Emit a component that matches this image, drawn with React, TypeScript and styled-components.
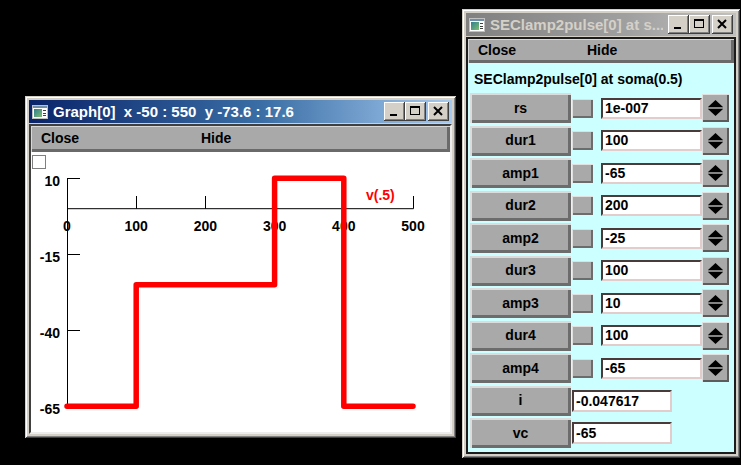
import React from 'react'
import styled, { createGlobalStyle } from 'styled-components'

const GlobalStyle = createGlobalStyle`
  html, body {
    margin: 0;
    padding: 0;
    background: #000;
  }
  body {
    font-family: 'Liberation Sans', Arial, sans-serif;
  }
`

const Desktop = styled.div`
  position: relative;
  width: 741px;
  height: 465px;
  background: #000;
  overflow: hidden;
`

// windows sit on the desktop at their own coordinates
const Win = styled.div<{ $x: number; $y: number; $w: number; $h: number }>`
  position: absolute;
  left: ${p => p.$x}px;
  top: ${p => p.$y}px;
  width: ${p => p.$w}px;
  height: ${p => p.$h}px;
  box-sizing: border-box;
  padding: 4px;
  background: #d4d0c8;
  box-shadow: inset 1px 1px 0 #d4d0c8, inset -1px -1px 0 #404040, inset 2px 2px 0 #ffffff,
    inset -2px -2px 0 #808080;
  display: flex;
  flex-direction: column;
`

const TitleBar = styled.div<{ $active?: boolean }>`
  height: 23px;
  flex-shrink: 0;
  display: flex;
  align-items: center;
  gap: 5px;
  padding: 0 3px;
  background: ${p =>
    p.$active
      ? 'linear-gradient(90deg, #0a246a 0%, #3a6ea5 55%, #a6caf0 100%)'
      : 'linear-gradient(90deg, #808080 0%, #a0a0a0 60%, #c0c0c0 100%)'};
`

const TitleText = styled.span<{ $active?: boolean }>`
  flex: 1;
  min-width: 0;
  color: ${p => (p.$active ? '#ffffff' : '#d4d0c8')};
  font-weight: bold;
  font-size: 15px;
  white-space: pre;
  overflow: hidden;
`

const Controls = styled.div`
  display: flex;
`

const CtlButton = styled.div<{ $apart?: boolean }>`
  width: 21px;
  height: 19px;
  margin-left: ${p => (p.$apart ? 2 : 0)}px;
  box-sizing: border-box;
  background: #d4d0c8;
  box-shadow: inset -1px -1px 0 #404040, inset 1px 1px 0 #ffffff, inset -2px -2px 0 #808080;
  display: flex;
  align-items: center;
  justify-content: center;
`

const Body = styled.div<{ $dark?: boolean }>`
  flex: 1;
  min-height: 0;
  margin-top: 1px;
  display: flex;
  flex-direction: column;
  border: 2px solid;
  border-color: ${p => (p.$dark ? '#1c1c1c' : '#404040 #ececec #ececec #404040')};
`

const MenuBar = styled.div<{ $h: number }>`
  height: ${p => p.$h}px;
  flex-shrink: 0;
  box-sizing: border-box;
  padding-bottom: 2px;
  display: flex;
  align-items: center;
  background: #a9a9a9;
  box-shadow: inset 1px 1px 0 #d8d8d8, inset -3px -3px 0 #6a6a6a;
`

const MenuItem = styled.span<{ $w?: number }>`
  width: ${p => (p.$w ? `${p.$w}px` : 'auto')};
  box-sizing: border-box;
  padding-left: 10px;
  font-weight: bold;
  font-size: 14px;
  color: #000;
`

const Canvas = styled.div`
  flex: 1;
  position: relative;
  background: #fff;
  overflow: hidden;
`

const CornerBox = styled.div`
  position: absolute;
  left: 1px;
  top: 3px;
  width: 14px;
  height: 14px;
  box-sizing: border-box;
  border: 1px solid #808080;
  background: #fff;
`

const Plot = styled.svg`
  display: block;
  width: 100%;
  height: 100%;
  font-family: 'Liberation Sans', Arial, sans-serif;
  font-weight: bold;
  font-size: 14px;
`

const Panel = styled.div`
  flex: 1;
  background: #ccffff;
  padding: 8px 0 0 2px;
  display: flex;
  flex-direction: column;
`

const PanelTitle = styled.div`
  font-weight: bold;
  font-size: 14px;
  line-height: 16px;
  padding-left: 4px;
  margin-bottom: 6px;
  color: #000;
`

const Rows = styled.div`
  display: flex;
  flex-direction: column;
  gap: 2.5px;
`

const Row = styled.div`
  display: flex;
  align-items: center;
  height: 30px;
`

const LabelButton = styled.div`
  width: 101px;
  height: 30px;
  box-sizing: border-box;
  padding-bottom: 1px;
  display: flex;
  align-items: center;
  justify-content: center;
  font-weight: bold;
  font-size: 14px;
  color: #000;
  background: #a9a9a9;
  box-shadow: inset 2px 2px 0 #dcdcdc, inset -3px -3px 0 #6c6c6c;
`

const Toggle = styled.div`
  width: 21px;
  height: 19px;
  margin-left: 1px;
  box-sizing: border-box;
  background: #a9a9a9;
  box-shadow: inset 1px 1px 0 #e0e0e0, inset -2px -2px 0 #6c6c6c;
`

const Field = styled.div<{ $w: number; $h: number; $ml: number }>`
  width: ${p => p.$w}px;
  height: ${p => p.$h}px;
  margin-left: ${p => p.$ml}px;
  box-sizing: border-box;
  padding-left: 2px;
  background: #fff;
  border: 2px solid;
  border-color: #4a3a3a #e2cccc #e2cccc #4a3a3a;
  font-weight: bold;
  font-size: 14px;
  line-height: ${p => p.$h - 4}px;
  color: #000;
  white-space: nowrap;
`

const Spinner = styled.div`
  width: 27px;
  height: 28px;
  box-sizing: border-box;
  background: #a9a9a9;
  box-shadow: inset 1px 1px 0 #e0e0e0, inset -2px -2px 0 #5c5c5c;
`

const WinIcon = () => (
  <svg width="16" height="14" viewBox="0 0 16 14">
    <defs>
      <linearGradient id="ic" x1="0" y1="0" x2="1" y2="1">
        <stop offset="0" stopColor="#2f7f8f" />
        <stop offset="1" stopColor="#7fbf6f" />
      </linearGradient>
    </defs>
    <rect x="0" y="0" width="16" height="14" fill="#c0c0c0" />
    <rect x="1" y="1" width="14" height="12" fill="#ffffff" />
    <rect x="1" y="1" width="14" height="2" fill="#6f8fa8" />
    <rect x="2" y="4" width="8" height="8" fill="url(#ic)" />
    <rect x="11" y="5" width="3" height="1" fill="#404040" />
    <rect x="11" y="8" width="3" height="1" fill="#404040" />
    <rect x="11" y="10" width="3" height="1" fill="#404040" />
  </svg>
)

const Glyph = ({ kind }: { kind: 'min' | 'max' | 'close' }) => (
  <svg width="21" height="19" viewBox="0 0 21 19">
    {kind === 'min' && <rect x="6" y="12" width="7" height="2" fill="#000" />}
    {kind === 'max' && (
      <>
        <rect x="5.5" y="4.5" width="9" height="8" fill="none" stroke="#000" />
        <rect x="5" y="4" width="10" height="2" fill="#000" />
      </>
    )}
    {kind === 'close' && (
      <path d="M6 5 L14 13 M14 5 L6 13" stroke="#000" strokeWidth="2" fill="none" />
    )}
  </svg>
)

const Title = ({ text, active }: { text: string; active?: boolean }) => (
  <TitleBar $active={active}>
    <WinIcon />
    <TitleText $active={active}>{text}</TitleText>
    <Controls>
      <CtlButton>
        <Glyph kind="min" />
      </CtlButton>
      <CtlButton>
        <Glyph kind="max" />
      </CtlButton>
      <CtlButton $apart>
        <Glyph kind="close" />
      </CtlButton>
    </Controls>
  </TitleBar>
)

const SpinArrows = () => (
  <svg width="27" height="28" viewBox="0 0 27 28">
    <polygon points="6,13 13.5,6 21,13" fill="#000" />
    <polygon points="6,15 13.5,22 21,15" fill="#000" />
    <line x1="6" y1="14" x2="21" y2="14" stroke="#5c5c5c" />
  </svg>
)

// graph scale, page coordinates
const X0 = 67
const sx = (v: number) => X0 + v * 0.692
const sy = (v: number) => 178.3 + (10 - v) * 3.04

const xTicks = [0, 100, 200, 300, 400, 500]
const yTicks = [10, -15, -40, -65]

const GraphPlot = () => {
  const trace = `M${sx(0)} ${sy(-65)} H${sx(100)} V${sy(-25)} H${sx(300)} V${sy(10)} H${sx(400)} V${sy(-65)} H${sx(500)}`
  return (
    <Plot>
      <g transform="translate(-31 -152)">
        <line x1={X0 + 0.5} y1={sy(10)} x2={X0 + 0.5} y2={sy(-65)} stroke="#000" />
        <line x1={X0} y1={sy(0)} x2={sx(500) + 0.5} y2={sy(0)} stroke="#000" />
        {yTicks.map(v => (
          <g key={v}>
            <line x1={X0} y1={Math.round(sy(v)) + 0.5} x2={X0 + 13} y2={Math.round(sy(v)) + 0.5} stroke="#000" />
            <text x={60} y={Math.round(sy(v)) + 8} textAnchor="end" fill="#000">
              {v}
            </text>
          </g>
        ))}
        {xTicks.map(v => (
          <g key={v}>
            {v > 0 && (
              <line x1={Math.round(sx(v)) + 0.5} y1={196} x2={Math.round(sx(v)) + 0.5} y2={sy(0)} stroke="#000" />
            )}
            <text x={sx(v)} y={231} textAnchor="middle" fill="#000">
              {v}
            </text>
          </g>
        ))}
        <path d={trace} fill="none" stroke="#ff0000" strokeWidth="5.5" strokeLinejoin="round" strokeLinecap="round" />
        <text x={366} y={200} fill="#ff0000">
          v(.5)
        </text>
      </g>
    </Plot>
  )
}

const params = [
  { name: 'rs', value: '1e-007' },
  { name: 'dur1', value: '100' },
  { name: 'amp1', value: '-65' },
  { name: 'dur2', value: '200' },
  { name: 'amp2', value: '-25' },
  { name: 'dur3', value: '100' },
  { name: 'amp3', value: '10' },
  { name: 'dur4', value: '100' },
  { name: 'amp4', value: '-65' },
]

const readouts = [
  { name: 'i', value: '-0.047617' },
  { name: 'vc', value: '-65' },
]

export default function App() {
  return (
    <Desktop>
      <GlobalStyle />
      <Win $x={25} $y={96} $w={431} $h={342}>
        <Title text="Graph[0]  x -50 : 550  y -73.6 : 17.6" active />
        <Body>
          <MenuBar $h={26}>
            <MenuItem $w={160}>Close</MenuItem>
            <MenuItem>Hide</MenuItem>
          </MenuBar>
          <Canvas>
            <GraphPlot />
            <CornerBox />
          </Canvas>
        </Body>
      </Win>

      <Win $x={462} $y={9} $w={278} $h={449}>
        <Title text="SEClamp2pulse[0] at s..." />
        <Body $dark>
          <MenuBar $h={24}>
            <MenuItem $w={109}>Close</MenuItem>
            <MenuItem>Hide</MenuItem>
          </MenuBar>
          <Panel>
            <PanelTitle>SEClamp2pulse[0] at soma(0.5)</PanelTitle>
            <Rows>
              {params.map(p => (
                <Row key={p.name}>
                  <LabelButton>{p.name}</LabelButton>
                  <Toggle />
                  <Field $w={101} $h={21} $ml={8}>
                    {p.value}
                  </Field>
                  <Spinner>
                    <SpinArrows />
                  </Spinner>
                </Row>
              ))}
              {readouts.map(p => (
                <Row key={p.name}>
                  <LabelButton>{p.name}</LabelButton>
                  <Field $w={100} $h={22} $ml={1}>
                    {p.value}
                  </Field>
                </Row>
              ))}
            </Rows>
          </Panel>
        </Body>
      </Win>
    </Desktop>
  )
}
